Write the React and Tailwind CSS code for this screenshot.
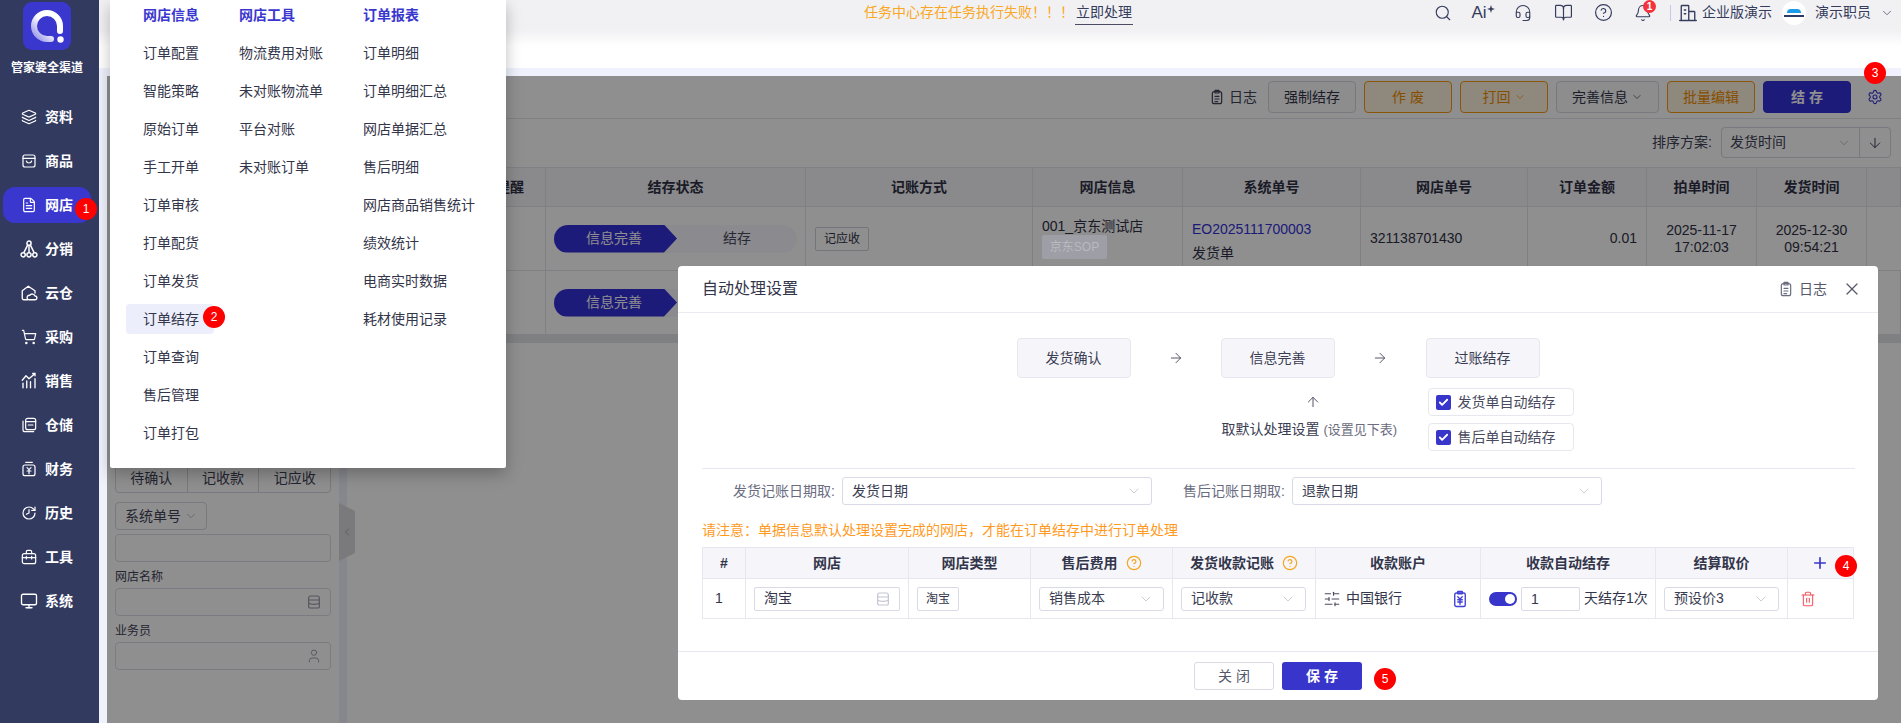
import {
  ArrowDown,
  ArrowRight,
  ArrowUp,
  Bell,
  BookOpen,
  Check,
  ChevronDown,
  ChevronLeft,
  CircleHelp,
  FileText,
  Headset,
  History,
  Layers,
  Monitor,
  Plus,
  Search,
  Settings,
  ShoppingCart,
  SlidersHorizontal,
  Trash2,
  User,
  X,
} from "lucide-react";

const FONT = "font-['Liberation_Sans','Noto_Sans_CJK_SC',sans-serif]";

const Svg = ({ children, className = "w-4 h-4" }) => (
  <svg viewBox="0 0 24 24" fill="none" stroke="currentColor" strokeWidth="1.8" strokeLinecap="round" strokeLinejoin="round" className={className}>
    {children}
  </svg>
);

const BagIcon = () => (
  <Svg><rect x="3" y="3" width="18" height="18" rx="3" /><path d="M3 8h18M8 12c1 4 7 4 8 0" /></Svg>
);
const NetworkIcon = () => (
  <Svg className="w-5 h-5"><circle cx="12" cy="5" r="2.5" /><circle cx="5" cy="19" r="2.5" /><circle cx="12" cy="19" r="2.5" /><circle cx="19" cy="19" r="2.5" /><path d="M12 8v8M10 8l-4 8M14 8l4 8" /></Svg>
);
const CloudHouseIcon = () => (
  <Svg className="w-[18px] h-[18px]"><path d="M10 21H5a2 2 0 0 1-2-2V9l8-6 9 6v3" /><path d="M12 21a3 3 0 0 1 1-6 4 4 0 0 1 7 1 2.5 2.5 0 0 1 0 5z" /></Svg>
);
const ChartIcon = () => (
  <Svg className="w-[18px] h-[18px]"><path d="M3 11l5-6 4 4 8-7M17 2h3v3M4 15v6M9 12v9M14 13v8M20 9v12" /></Svg>
);
const StackIcon = () => (
  <Svg><rect x="7" y="2" width="15" height="17" rx="3" /><path d="M7 7h15M11 12h7M3 6v13a3 3 0 0 0 3 3h13" /></Svg>
);
const FinanceIcon = () => (
  <Svg><rect x="3" y="6" width="18" height="16" rx="3" /><path d="M7 2h10M9 10l3 3 3-3M12 13v6M9 15h6" /></Svg>
);
const ToolboxIcon = () => (
  <Svg><rect x="2" y="7" width="20" height="15" rx="3" /><path d="M8 7V4a2 2 0 0 1 2-2h4a2 2 0 0 1 2 2v3M2 13h20M8 11v4M16 11v4" /></Svg>
);
const StoreIcon = ({ className }) => (
  <Svg className={className}><path d="M7 3h10a3 3 0 0 1 3 3v13a2 2 0 0 1-2 2H6a2 2 0 0 1-2-2V6a3 3 0 0 1 3-3z" /><path d="M4 9h16M4 14c3 2 13 2 16 0" /></Svg>
);
const ClipboardIcon = ({ className }) => (
  <Svg className={className}><rect x="5" y="4" width="14" height="18" rx="3" /><path d="M9 2h6v4H9zM9 11h6M9 15h6M9 19h4" /></Svg>
);
const YenClipIcon = () => (
  <Svg className="w-[18px] h-[18px] text-[#3f3fd6]"><rect x="5" y="4" width="14" height="18" rx="2" /><path d="M9 2h6v3H9zM9 9l3 3 3-3M12 12v7M9 13h6M9 16h6" /></Svg>
);
const BuildingIcon = () => (
  <Svg className="w-[18px] h-[18px]"><path d="M3 22V3a1 1 0 0 1 1-1h8a1 1 0 0 1 1 1v19M13 10h7a1 1 0 0 1 1 1v11M1 22h22M7 8h2M7 13h2" /></Svg>
);
const SparkIcon = () => (
  <svg viewBox="0 0 10 10" className="w-[8px] h-[8px] -mt-[8px]" fill="currentColor">
    <path d="M5 0l1.2 3.8L10 5 6.2 6.2 5 10 3.8 6.2 0 5l3.8-1.2z" />
  </svg>
);

const navItems = [
  { label: "资料", icon: <Layers className="w-4 h-4" strokeWidth={1.8} /> },
  { label: "商品", icon: <BagIcon /> },
  { label: "网店", icon: <FileText className="w-4 h-4" strokeWidth={1.8} />, active: true },
  { label: "分销", icon: <NetworkIcon /> },
  { label: "云仓", icon: <CloudHouseIcon /> },
  { label: "采购", icon: <ShoppingCart className="w-4 h-4" strokeWidth={1.8} /> },
  { label: "销售", icon: <ChartIcon /> },
  { label: "仓储", icon: <StackIcon /> },
  { label: "财务", icon: <FinanceIcon /> },
  { label: "历史", icon: <History className="w-4 h-4 -scale-x-100" strokeWidth={1.8} /> },
  { label: "工具", icon: <ToolboxIcon /> },
  { label: "系统", icon: <Monitor className="w-[18px] h-[18px]" strokeWidth={1.8} /> },
];

const menuCols = [
  {
    title: "网店信息",
    width: "w-[96px]",
    items: ["订单配置", "智能策略", "原始订单", "手工开单", "订单审核", "打单配货", "订单发货", "订单结存", "订单查询", "售后管理", "订单打包"],
  },
  {
    title: "网店工具",
    width: "w-[124px]",
    items: ["物流费用对账", "未对账物流单", "平台对账", "未对账订单"],
  },
  {
    title: "订单报表",
    width: "w-[130px]",
    items: ["订单明细", "订单明细汇总", "网店单据汇总", "售后明细", "网店商品销售统计", "绩效统计", "电商实时数据", "耗材使用记录"],
  },
];

const Logo = () => (
  <div className="w-12 h-12 rounded-[9px] bg-[#3a37cf]">
    <svg viewBox="0 0 48 48" className="w-12 h-12" fill="none">
      <defs>
        <linearGradient id="ring" x1="0" y1="1" x2="1" y2="0">
          <stop offset="0" stopColor="#8f8de6" />
          <stop offset="0.5" stopColor="#ffffff" />
        </linearGradient>
      </defs>
      <path d="M37 29v-5A13 13 0 1 0 24 37h4" stroke="url(#ring)" strokeWidth="6" strokeLinecap="round" />
      <circle cx="37.5" cy="37.5" r="3.2" fill="#fff" />
    </svg>
  </div>
);

const Sidebar = () => (
  <aside className="w-[99px] shrink-0 bg-[#323a60] text-white">
    <div className="h-[95px] flex flex-col items-center pt-[2px] pr-[5px]">
      <Logo />
      <div className="mt-[9px] text-[12px] leading-[18px] font-bold whitespace-nowrap">管家婆全渠道</div>
    </div>
    {navItems.map((item) => (
      <div key={item.label} className="h-[44px] flex items-center">
        <div className={`mx-[3px] w-[88px] h-[36px] rounded-[12px] flex items-center text-[14px] font-bold ${item.active ? "bg-[#3a37cf]" : ""}`}>
          <span className="w-[42px] flex justify-center pl-[10px]">{item.icon}</span>
          {item.label}
        </div>
      </div>
    ))}
  </aside>
);

const TopBar = () => (
  <div className="h-[68px] bg-[linear-gradient(#f1f1f4_30px,#ffffff_46px)]">
    <div className="h-[25px] flex items-center text-[14px] text-[#363c5c]">
      <span className="ml-[765px] text-[#f9a825] whitespace-nowrap">任务中心存在任务执行失败！！！</span>
      <span className="ml-[1px] w-[58px] h-[24px] leading-[22px] text-center border-b border-[#4b4b63] whitespace-nowrap">立即处理</span>
      <div className="ml-auto flex items-center pr-[7px]">
        <span className="w-[40px] flex justify-center"><Search className="w-[18px] h-[18px]" strokeWidth={1.5} /></span>
        <span className="w-[40px] flex justify-center items-center text-[17px] leading-none font-['Liberation_Sans',sans-serif]">Ai<SparkIcon /></span>
        <span className="w-[40px] flex justify-center"><Headset className="w-[18px] h-[18px]" strokeWidth={1.5} /></span>
        <span className="w-[40px] flex justify-center"><BookOpen className="w-[19px] h-[19px]" strokeWidth={1.5} /></span>
        <span className="w-[40px] flex justify-center"><CircleHelp className="w-[19px] h-[19px]" strokeWidth={1.5} /></span>
        <span className="w-[40px] flex justify-center relative">
          <Bell className="w-[18px] h-[18px]" strokeWidth={1.5} />
          <span className="absolute left-[20px] -top-[4px] w-[13px] h-[13px] rounded-full bg-[#f5323c] text-white text-[10px] leading-[13px] text-center font-bold">1</span>
        </span>
        <span className="ml-[7px] w-px h-[16px] bg-[#c5c9ea]" />
        <span className="ml-[8px] mr-[5px]"><BuildingIcon /></span>
        <span className="whitespace-nowrap">企业版演示</span>
        <span className="ml-[10px] w-[24px] h-[24px] rounded-full bg-white flex flex-col items-center justify-center gap-[2px]">
          <span className="w-[14px] h-[4px] rounded-t-full bg-[#1c9be6]" />
          <span className="w-[20px] h-[2px] bg-[#2b3a67]" />
        </span>
        <span className="ml-[9px] whitespace-nowrap">演示职员</span>
        <ChevronDown className="ml-[9px] w-[14px] h-[14px]" strokeWidth={1.2} />
      </div>
    </div>
  </div>
);

const Field = ({ children, className = "" }) => (
  <div className={`h-[28px] border border-[#dcdde6] rounded-[4px] flex items-center justify-end pr-[8px] text-[#9a9aa8] ${className}`}>
    {children}
  </div>
);

const FilterPanel = () => (
  <div className="w-[232px] shrink-0 bg-white px-[8px] pt-[387px] text-[14px] text-[#3f4258]">
    <div className="h-[30px] flex border border-[#d6d7e0] rounded-b-[4px] text-center leading-[28px]">
      <span className="flex-1 border-r border-[#d6d7e0]">待确认</span>
      <span className="flex-1 border-r border-[#d6d7e0]">记收款</span>
      <span className="flex-1">记应收</span>
    </div>
    <div className="mt-[9px] w-[92px] h-[28px] border border-[#d6d7e0] rounded-[4px] flex items-center pl-[9px] whitespace-nowrap">
      系统单号
      <ChevronDown className="ml-[3px] w-[14px] h-[14px] text-[#a8a8b4]" strokeWidth={1.2} />
    </div>
    <Field className="mt-[4px]" />
    <div className="mt-[5px] h-[21px] text-[12px] leading-[21px]">网店名称</div>
    <Field><StoreIcon className="w-4 h-4" /></Field>
    <div className="mt-[5px] h-[21px] text-[12px] leading-[21px]">业务员</div>
    <Field><User className="w-4 h-4" strokeWidth={1.4} /></Field>
  </div>
);

const ToolButton = ({ children, tone = "plain", width = "w-[88px]" }) => {
  const tones = {
    plain: "border-[#d6d7e0] bg-[#fbfbfc] text-[#33354a]",
    warn: "border-[#f49a12] bg-[#fdf3df] text-[#f08c00]",
    primary: "border-[#3431d8] bg-[#3431d8] text-white font-bold",
  };
  return (
    <div className={`${width} h-[32px] rounded-[4px] border flex items-center justify-center whitespace-nowrap ${tones[tone]}`}>
      {children}
    </div>
  );
};

const StatusPill = ({ showRest }) => (
  <div className="w-[243px] h-[28px] rounded-full bg-[#f8f8ff] overflow-hidden flex items-center text-[14px]">
    <div className="w-[123px] h-[28px] pr-[3px] bg-[#3431d8] text-white flex items-center justify-center [clip-path:polygon(0_0,110px_0,123px_50%,110px_100%,0_100%)]">
      信息完善
    </div>
    {showRest && <span className="flex-1 text-center text-[#4a4a5e]">结存</span>}
  </div>
);

const MAIN_COLS = "grid grid-cols-[199px_260px_227px_150px_178px_167px_119px_110px_110px_34px]";

const headCols = ["结存提醒", "结存状态", "记账方式", "网店信息", "系统单号", "网店单号", "订单金额", "拍单时间", "发货时间", ""];

const OrderTable = () => (
  <div className="text-[14px] text-[#2f3145]">
    <div className={`${MAIN_COLS} h-[40px] bg-[#f6f6fa] border-y border-[#e2e3ec] font-bold`}>
      {headCols.map((h, i) => (
        <div key={i} className={`flex items-center border-r border-[#e2e3ec] ${i === 0 ? "justify-end pr-[21px]" : "justify-center"}`}>{h}</div>
      ))}
    </div>
    <div className={`${MAIN_COLS} h-[64px] border-b border-[#e2e3ec]`}>
      <div className="border-r border-[#e2e3ec]" />
      <div className="border-r border-[#e2e3ec] flex items-center px-[8px]"><StatusPill showRest /></div>
      <div className="border-r border-[#e2e3ec] flex items-center px-[9px]">
        <span className="w-[54px] h-[24px] border border-[#cfd0da] rounded-[2px] text-[12px] leading-[22px] text-center">记应收</span>
      </div>
      <div className="border-r border-[#e2e3ec] pl-[9px] pt-[10px] leading-[19px]">
        <div className="whitespace-nowrap">001_京东测试店</div>
        {/* reads lighter than the dimming layer in the picture, so it sits above it */}
        <div className="relative z-10 w-[65px] h-[24px] -mt-[1px] rounded-[2px] bg-[#9e9ea6] text-[#b9b9be] text-[12px] leading-[24px] text-center">京东SOP</div>
      </div>
      <div className="border-r border-[#e2e3ec] pl-[9px] pt-[12px]">
        <div className="text-[#3431d8] leading-[20px]">EO2025111700003</div>
        <div className="leading-[20px] mt-[4px]">发货单</div>
      </div>
      <div className="border-r border-[#e2e3ec] pl-[9px] flex items-center">321138701430</div>
      <div className="border-r border-[#e2e3ec] pr-[9px] flex items-center justify-end">0.01</div>
      <div className="border-r border-[#e2e3ec] flex flex-col justify-center items-center leading-[17px]"><span>2025-11-17</span><span>17:02:03</span></div>
      <div className="border-r border-[#e2e3ec] flex flex-col justify-center items-center leading-[17px]"><span>2025-12-30</span><span>09:54:21</span></div>
      <div />
    </div>
    <div className={`${MAIN_COLS} h-[64px] border-b border-[#e2e3ec]`}>
      <div className="border-r border-[#e2e3ec]" />
      <div className="border-r border-[#e2e3ec] flex items-center px-[8px]"><StatusPill /></div>
      {headCols.slice(2).map((_, i) => (
        <div key={i} className="border-r border-[#e2e3ec]" />
      ))}
    </div>
    <div className="h-[8px] bg-[#e3e4e8]" />
  </div>
);

const MainArea = () => (
  <div className="flex-1 min-w-0 bg-white text-[14px] text-[#3f4258]">
    <div className="h-[43px] border-b border-[#e2e3ec] flex items-center justify-end gap-[8px] pr-[50px] relative">
      <ClipboardIcon className="w-4 h-4" />
      <span className="mr-[3px] -ml-[4px]">日志</span>
      <ToolButton>强制结存</ToolButton>
      <ToolButton tone="warn">作 废</ToolButton>
      <ToolButton tone="warn">打回<ChevronDown className="ml-[3px] w-3 h-3" strokeWidth={1.4} /></ToolButton>
      <ToolButton width="w-[103px]">完善信息<ChevronDown className="ml-[3px] w-3 h-3" strokeWidth={1.4} /></ToolButton>
      <ToolButton tone="warn">批量编辑</ToolButton>
      <ToolButton tone="primary">结 存</ToolButton>
      <Settings className="absolute right-[18px] top-[13px] w-4 h-4 text-[#3431d8]" strokeWidth={1.6} />
    </div>
    <div className="h-[48px] flex items-center justify-end pr-[10px] pb-[1px]">
      <span className="mr-[9px] whitespace-nowrap">排序方案:</span>
      <div className="w-[170px] h-[31px] border border-[#d6d7e0] rounded-[4px] flex items-center">
        <span className="pl-[8px] flex-1 whitespace-nowrap">发货时间</span>
        <ChevronDown className="mr-[8px] w-[14px] h-[14px] text-[#a8a8b4]" strokeWidth={1.2} />
        <span className="w-[31px] h-full border-l border-[#d6d7e0] flex items-center justify-center"><ArrowDown className="w-4 h-4" strokeWidth={1.5} /></span>
      </div>
    </div>
    <OrderTable />
  </div>
);

const FlyoutMenu = () => (
  <div className="absolute z-20 left-[110px] top-0 w-[396px] h-[468px] bg-white shadow-[0_6px_16px_rgba(0,0,0,0.25)] rounded-b-[2px] pl-[33px] flex text-[14px] text-[#33354a]">
    {menuCols.map((col) => (
      <div key={col.title} className={col.width}>
        <div className="h-[30px] mb-[4px] leading-[30px] font-bold text-[#3a37cf]">{col.title}</div>
        {col.items.map((item) => (
          <div key={item} className="h-[38px] flex items-center whitespace-nowrap">
            <span className={item === "订单结存" ? "-ml-[17px] pl-[17px] w-[88px] h-[30px] leading-[30px] rounded-[4px] bg-[#eceefb]" : ""}>{item}</span>
          </div>
        ))}
      </div>
    ))}
  </div>
);

const FlowBox = ({ children }) => (
  <div className="w-[114px] h-[40px] rounded-[4px] border border-[#e6e7ef] bg-[#f6f6fa] text-[14px] text-[#3a3c52] flex items-center justify-center">
    {children}
  </div>
);

const CheckRow = ({ children }) => (
  <div className="w-[146px] h-[28px] rounded-[4px] border border-[#e6e7ef] flex items-center pl-[7px] text-[14px] text-[#4a4a5e] whitespace-nowrap">
    <span className="w-[15px] h-[15px] rounded-[2px] bg-[#3835cb] flex items-center justify-center mr-[7px]">
      <Check className="w-[11px] h-[11px] text-white" strokeWidth={4} />
    </span>
    {children}
  </div>
);

const Dropdown = ({ children, className = "" }) => (
  <div className={`border border-[#d9dae6] rounded-[3px] flex items-center justify-between px-[9px] text-[14px] text-[#3a3c52] whitespace-nowrap ${className}`}>
    {children}
    <ChevronDown className="w-4 h-4 text-[#b8b9c6]" strokeWidth={1.1} />
  </div>
);

const SETTING_COLS = "grid grid-cols-[43px_163px_122px_142px_143px_165px_175px_132px_65px]";

const settingHeads = [
  { t: "#" },
  { t: "网店" },
  { t: "网店类型" },
  { t: "售后费用", help: true },
  { t: "发货收款记账", help: true },
  { t: "收款账户" },
  { t: "收款自动结存" },
  { t: "结算取价" },
  { t: "" },
];

const SettingTable = () => (
  <div className="mx-[24px] mt-[7px] w-[1152px] border border-[#e6e7ef] text-[14px] text-[#33354a]">
    <div className={`${SETTING_COLS} h-[31px] bg-[#f6f6fa] border-b border-[#e6e7ef] font-bold`}>
      {settingHeads.map((h, i) => (
        <div key={i} className={`flex items-center justify-center gap-[8px] ${i < 8 ? "border-r border-[#e6e7ef]" : ""}`}>
          {h.t}
          {h.help && <CircleHelp className="w-4 h-4 text-[#f5a623]" strokeWidth={1.8} />}
          {i === 8 && <Plus className="w-[18px] h-[18px] -ml-[2px] text-[#3835cb]" strokeWidth={2.2} />}
        </div>
      ))}
    </div>
    <div className={`${SETTING_COLS} h-[39px]`}>
      <div className="border-r border-[#e6e7ef] flex items-center pl-[12px]">1</div>
      <div className="border-r border-[#e6e7ef] flex items-center px-[8px]">
        <div className="w-[147px] h-[24px] border border-[#d9dae6] rounded-[2px] flex items-center justify-between pl-[9px] pr-[8px]">
          淘宝
          <StoreIcon className="w-4 h-4 text-[#c4c5d0]" />
        </div>
      </div>
      <div className="border-r border-[#e6e7ef] flex items-center px-[8px]">
        <span className="w-[42px] h-[24px] border border-[#d9dae6] rounded-[2px] text-[12px] leading-[22px] text-center">淘宝</span>
      </div>
      <div className="border-r border-[#e6e7ef] flex items-center px-[8px]"><Dropdown className="w-[126px] h-[24px]">销售成本</Dropdown></div>
      <div className="border-r border-[#e6e7ef] flex items-center px-[8px]"><Dropdown className="w-[125px] h-[24px]">记收款</Dropdown></div>
      <div className="border-r border-[#e6e7ef] flex items-center pl-[7px] pr-[11px]">
        <SlidersHorizontal className="w-[18px] h-[18px] mr-[5px] text-[#4a4a5e]" strokeWidth={1.5} />
        <span className="flex-1">中国银行</span>
        <YenClipIcon />
      </div>
      <div className="border-r border-[#e6e7ef] flex items-center pl-[8px] whitespace-nowrap">
        <span className="w-[28px] h-[14px] rounded-full bg-[#3835cb] flex items-center justify-end pr-[2px]">
          <span className="w-[10px] h-[10px] rounded-full bg-white" />
        </span>
        <span className="ml-[4px] mr-[4px] w-[59px] h-[24px] border border-[#d9dae6] rounded-[2px] pl-[9px] leading-[22px]">1</span>
        天结存1次
      </div>
      <div className="border-r border-[#e6e7ef] flex items-center px-[8px]"><Dropdown className="w-[115px] h-[24px]">预设价3</Dropdown></div>
      <div className="flex items-center pl-[12px]"><Trash2 className="w-4 h-4 text-[#f4545c]" strokeWidth={1.6} /></div>
    </div>
  </div>
);

const SettingsDialog = () => (
  <div className="absolute z-20 left-[678px] top-[266px] w-[1200px] h-[434px] bg-white rounded-[4px] flex flex-col">
    <div className="h-[47px] border-b border-[#ebecf2] flex items-center pl-[24px] pr-[16px] text-[#33354a]">
      <span className="text-[16px]">自动处理设置</span>
      <ClipboardIcon className="ml-auto w-4 h-4 text-[#6a6c80]" />
      <span className="ml-[5px] text-[14px] text-[#55576b]">日志</span>
      <X className="ml-[15px] w-5 h-5 text-[#55576b]" strokeWidth={1.5} />
    </div>
    <div className="flex-1">
      <div className="w-[523px] mx-auto mt-[25px]">
        <div className="flex items-center">
          <FlowBox>发货确认</FlowBox>
          <span className="w-[90px] flex justify-center"><ArrowRight className="w-4 h-4 text-[#55576b]" strokeWidth={1.5} /></span>
          <FlowBox>信息完善</FlowBox>
          <span className="w-[91px] flex justify-center"><ArrowRight className="w-4 h-4 text-[#55576b]" strokeWidth={1.5} /></span>
          <FlowBox>过账结存</FlowBox>
        </div>
        <div className="mt-[10px] ml-[205px] w-[360px] flex whitespace-nowrap">
          <div className="w-[206px] shrink-0 flex flex-col pt-[6px]">
            <ArrowUp className="ml-[83px] w-4 h-4 text-[#55576b]" strokeWidth={1.5} />
            <div className="mt-[9px] h-[20px] leading-[20px] text-[14px] text-[#3a3c52]">
              取默认处理设置 <span className="text-[13px] text-[#6a6c80]">(设置见下表)</span>
            </div>
          </div>
          <div className="flex flex-col gap-[7px]">
            <CheckRow>发货单自动结存</CheckRow>
            <CheckRow>售后单自动结存</CheckRow>
          </div>
        </div>
      </div>
      <div className="mx-[24px] mt-[17px] w-[1153px] h-px bg-[#e6e7ef]" />
      <div className="mx-[24px] mt-[8px] flex items-center text-[14px] text-[#6a6c80]">
        <span className="w-[133px] text-right whitespace-nowrap">发货记账日期取:</span>
        <Dropdown className="ml-[7px] w-[310px] h-[28px]">发货日期</Dropdown>
        <span className="w-[133px] text-right whitespace-nowrap">售后记账日期取:</span>
        <Dropdown className="ml-[7px] w-[310px] h-[28px]">退款日期</Dropdown>
      </div>
      <div className="mx-[24px] mt-[15px] h-[20px] leading-[20px] text-[14px] text-[#ff9a1f] whitespace-nowrap">
        请注意：单据信息默认处理设置完成的网店，才能在订单结存中进行订单处理
      </div>
      <SettingTable />
    </div>
    <div className="h-[49px] border-t border-[#e6e7ef] flex justify-center gap-[8px] pt-[10px] text-[14px]">
      <div className="w-[80px] h-[28px] rounded-[3px] border border-[#d9dae6] text-[#55576b] flex items-center justify-center">关 闭</div>
      <div className="w-[80px] h-[28px] rounded-[3px] bg-[#3835cb] text-white font-bold flex items-center justify-center">保 存</div>
    </div>
  </div>
);

const Step = ({ n, className }) => (
  <span className={`absolute z-30 w-[22px] h-[22px] rounded-full bg-[#f00] text-white text-[12px] leading-[22px] text-center ${className}`}>{n}</span>
);

export default function App() {
  return (
    <div className={`relative w-[1901px] h-[723px] overflow-hidden flex bg-white ${FONT}`}>
      <Sidebar />
      <div className="flex-1 min-w-0 flex flex-col">
        <TopBar />
        <div className="h-[8px] shrink-0 bg-[#eff1fc]" />
        <div className="flex-1 min-h-0 flex pl-[8px] bg-[#eff1fc]">
          <FilterPanel />
          <div className="w-[8px] shrink-0 bg-[#eff1fc] relative">
            <span className="absolute left-0 top-[427px] w-[16px] h-[58px] bg-[#d9d9df] [clip-path:polygon(0_0,100%_14%,100%_86%,0_100%)] flex items-center justify-center text-[#8d8d99]">
              <ChevronLeft className="w-[12px] h-[12px]" strokeWidth={1.4} />
            </span>
          </div>
          <MainArea />
        </div>
      </div>

      {/* dimming layer of the open dialog */}
      <div className="absolute left-[107px] top-[76px] right-0 bottom-0 bg-black/44" />

      <FlyoutMenu />
      <SettingsDialog />

      <Step n="1" className="left-[75px] top-[198px]" />
      <Step n="2" className="left-[203px] top-[306px]" />
      <Step n="3" className="left-[1864px] top-[62px]" />
      <Step n="4" className="left-[1835px] top-[555px]" />
      <Step n="5" className="left-[1374px] top-[668px]" />
    </div>
  );
}
